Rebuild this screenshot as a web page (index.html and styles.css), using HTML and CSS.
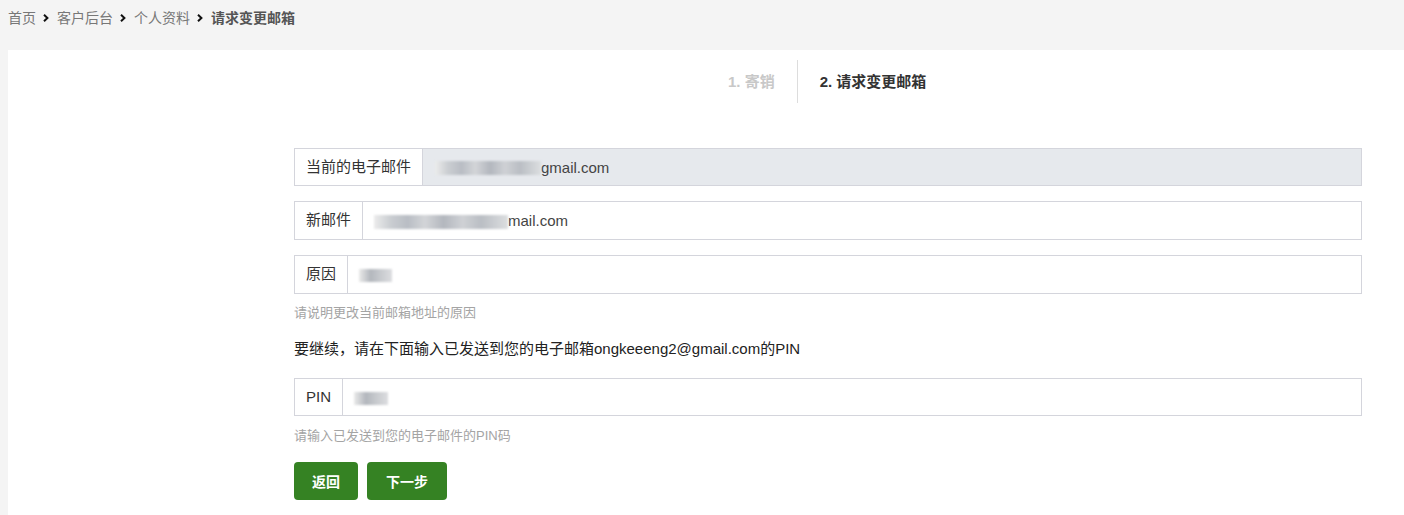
FILE: index.html
```html
<!DOCTYPE html>
<html lang="zh-CN">

<head>
    <meta charset="UTF-8">
    <title>请求变更邮箱</title>
    <link rel="stylesheet" href="styles.css">
</head>

<body>
    <div class="breadcrumb">
        <a href="#">首页</a>
        <svg class="crumb-sep" viewBox="0 0 6 8"><path d="M1 0.8 L4.4 4 L1 7.2" /></svg>
        <a href="#">客户后台</a>
        <svg class="crumb-sep" viewBox="0 0 6 8"><path d="M1 0.8 L4.4 4 L1 7.2" /></svg>
        <a href="#">个人资料</a>
        <svg class="crumb-sep" viewBox="0 0 6 8"><path d="M1 0.8 L4.4 4 L1 7.2" /></svg>
        <span class="current">请求变更邮箱</span>
    </div>

    <div class="card">
        <div class="steps-row">
            <div></div>
            <div class="steps">
                <div class="step done">1. 寄销</div>
                <div class="step active">2. 请求变更邮箱</div>
            </div>
        </div>

        <form class="email-form">
            <div class="input-group">
                <span class="addon">当前的电子邮件</span>
                <div class="field disabled"><span class="masked" style="width: 106px"></span>gmail.com</div>
            </div>

            <div class="input-group second">
                <span class="addon">新邮件</span>
                <div class="field"><span class="masked" style="width: 134px"></span>mail.com</div>
            </div>

            <div class="input-group reason-group">
                <span class="addon">原因</span>
                <div class="field"><span class="masked short" style="width: 33px"></span></div>
            </div>
            <div class="help">请说明更改当前邮箱地址的原因</div>

            <p class="notice">要继续，请在下面输入已发送到您的电子邮箱ongkeeeng2@gmail.com的PIN</p>

            <div class="input-group pin-group">
                <span class="addon">PIN</span>
                <div class="field"><span class="masked short" style="width: 34px"></span></div>
            </div>
            <div class="help">请输入已发送到您的电子邮件的PIN码</div>

            <div class="actions">
                <button type="button" class="btn">返回</button>
                <button type="button" class="btn wide">下一步</button>
            </div>
        </form>
    </div>
</body>

</html>
```

FILE: styles.css
```css
* {
    margin: 0;
    padding: 0;
    box-sizing: border-box;
}

body {
    background: #f4f4f4;
    font-family: 'Liberation Sans', 'Noto Sans CJK SC', sans-serif;
    color: #333;
    padding-left: 8px;
    overflow: hidden;
}

.breadcrumb {
    height: 50px;
    display: flex;
    align-items: center;
    padding-bottom: 16px;
    font-size: 14px;
}

.breadcrumb a {
    color: #777;
    text-decoration: none;
}

.crumb-sep {
    width: 6px;
    height: 8px;
    margin: 1px 8px 0 7px;
    fill: none;
    stroke: #111;
    stroke-width: 2;
}

.breadcrumb .current {
    color: #555;
    font-weight: bold;
}

.card {
    background: white;
    min-height: 480px;
}

.steps-row {
    display: grid;
    grid-template-columns: 1fr 1fr;
    padding-top: 10px;
}

.steps {
    display: flex;
    height: 43px;
}

.step {
    padding: 0 22px;
    font-size: 15px;
    font-weight: bold;
    line-height: 43px;
}

.step.done {
    color: #c8c8c8;
    border-right: 1px solid #ddd;
}

.step.active {
    color: #333;
}

.email-form {
    padding: 45px 42px 0 286px;
}

.input-group {
    display: flex;
    height: 38px;
    border: 1px solid #d4d5dc;
    margin-bottom: 15px;
    font-size: 15px;
}

.input-group.second {
    height: 39px;
}

.addon {
    padding: 0 11px;
    line-height: 36px;
    border-right: 1px solid #d4d5dc;
    color: #333;
    background: white;
}

.field {
    flex: 1;
    display: flex;
    align-items: center;
    padding: 0 12px 0 11px;
    color: #444;
}

.field.disabled {
    background: #e6e9ed;
    padding-left: 12px;
}

.masked {
    display: inline-block;
    height: 14px;
    margin-top: 2px;
    background: linear-gradient(90deg, #ececec 0%, #cbced2 12%, #b9bdc4 25%, #d3d5d8 38%, #b3b7be 52%, #cfd1d5 66%, #babec4 80%, #dcdee0 100%);
    filter: blur(1px);
}

.masked.short {
    height: 13px;
    background: linear-gradient(90deg, #eaeaea 0%, #b3b7bd 35%, #c4c7cb 60%, #dcdde0 100%);
}

.reason-group,
.pin-group {
    margin-bottom: 0;
}

.reason-group {
    height: 39px;
}

.help {
    margin-top: 10px;
    font-size: 13px;
    line-height: 18px;
    color: #a4a4a4;
}

.notice {
    margin-top: 16px;
    font-size: 15px;
    line-height: 22px;
    color: #222;
}

.pin-group {
    margin-top: 18px;
}

.pin-group + .help {
    margin-top: 11px;
}

.actions {
    display: flex;
    gap: 9px;
    margin-top: 17px;
}

.btn {
    height: 38px;
    width: 64px;
    border: none;
    border-radius: 4px;
    background: #358223;
    color: white;
    font-family: inherit;
    font-size: 14px;
    font-weight: bold;
    cursor: pointer;
}

.btn.wide {
    width: 80px;
}
```
